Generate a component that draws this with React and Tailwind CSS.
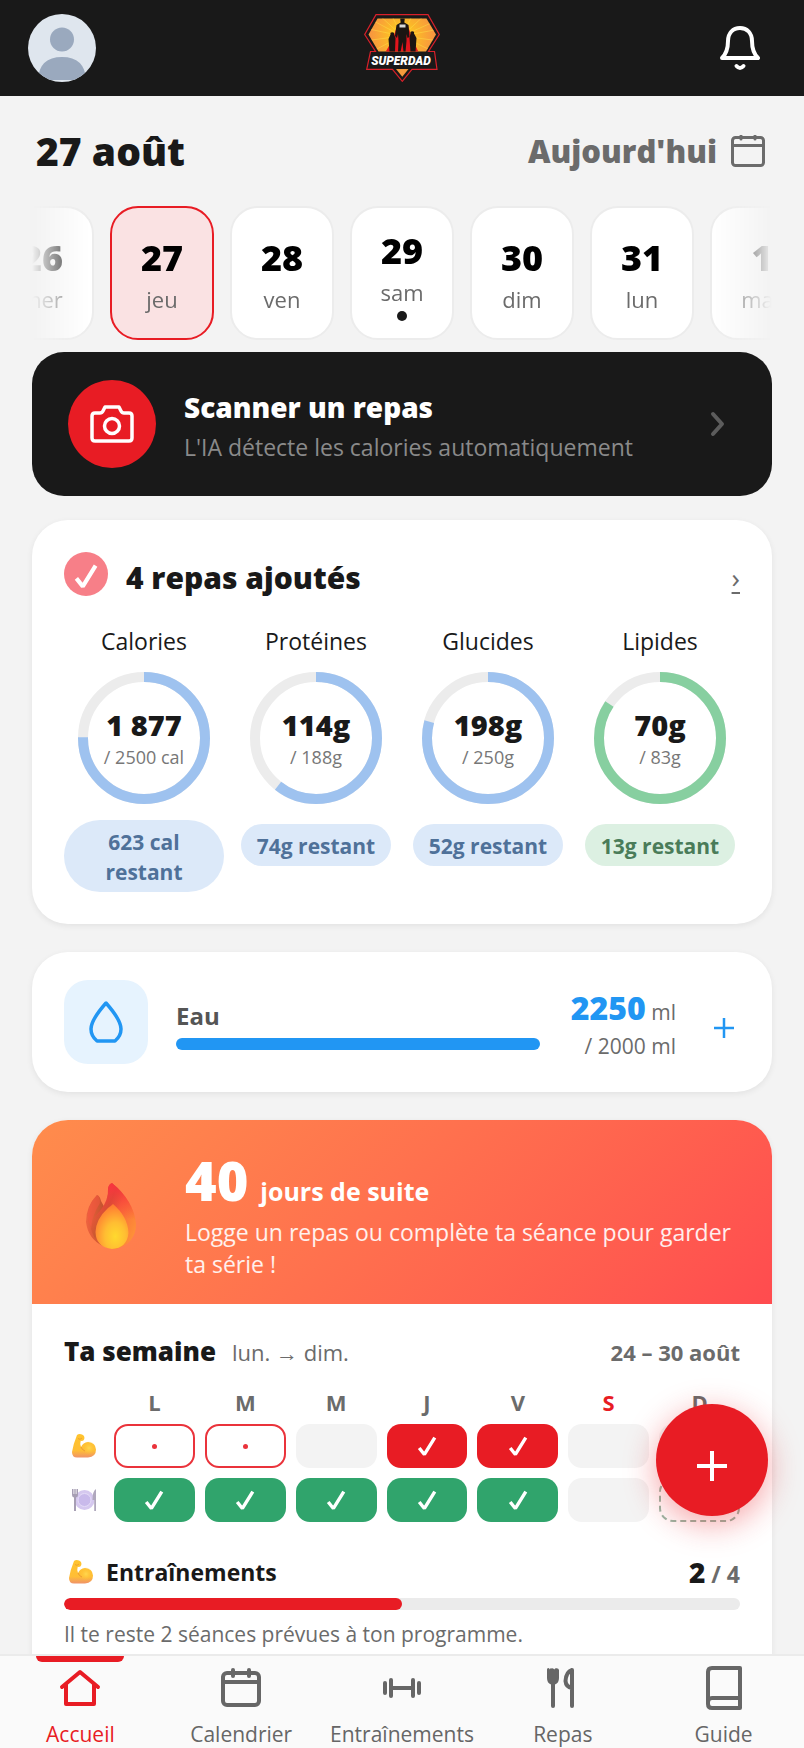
import React from "react";

const DAYS = [
  { num: "26", label: "mer" },
  { num: "27", label: "jeu", active: true },
  { num: "28", label: "ven" },
  { num: "29", label: "sam", dot: true },
  { num: "30", label: "dim" },
  { num: "31", label: "lun" },
  { num: "1", label: "mar" },
];

const MACROS = [
  { name: "Calories", value: "1 877", goal: "/ 2500 cal", left: "623 cal restant", ratio: 0.7508, color: "#9ec2ef", pill: "mt-4 rounded-[36px] px-6 bg-[#dce9f9] text-[#4f7199]" },
  { name: "Protéines", value: "114g", goal: "/ 188g", left: "74g restant", ratio: 0.606, color: "#9ec2ef", pill: "mt-5 rounded-full px-4 bg-[#dce9f9] text-[#4f7199]" },
  { name: "Glucides", value: "198g", goal: "/ 250g", left: "52g restant", ratio: 0.792, color: "#9ec2ef", pill: "mt-5 rounded-full px-4 bg-[#dce9f9] text-[#4f7199]" },
  { name: "Lipides", value: "70g", goal: "/ 83g", left: "13g restant", ratio: 0.843, color: "#87cfa0", pill: "mt-5 rounded-full px-4 bg-[#dcf0e2] text-[#4a7c59]" },
];

const WEEK = ["L", "M", "M", "J", "V", "S", "D"];
const TRAINING = ["planned", "planned", "empty", "done", "done", "empty", "empty"];
const MEALS = ["done", "done", "done", "done", "done", "empty", "today"];

const Logo = () => (
  <svg width="76" height="68" viewBox="0 0 76 68" role="img" aria-label="Superdad">
    <defs>
      <radialGradient id="sun" cx="38" cy="22" r="32" gradientUnits="userSpaceOnUse">
        <stop offset="0" stopColor="#ffdc1e" />
        <stop offset="0.45" stopColor="#fbb829" />
        <stop offset="1" stopColor="#f7963f" />
      </radialGradient>
      <clipPath id="shield">
        <path d="M13.5 4.5H62.5L72 20.5L62 37.5H14.5L4.5 20.5Z" />
      </clipPath>
    </defs>
    <path
      d="M12 .7H64L75.3 20.5L64.5 37.5H70.5L73 55.3H48L38.3 67.3L28.5 55.3H2.7L6.5 37.5H11.5L.7 20.5Z"
      fill="#191919"
      stroke="#d9202a"
      strokeWidth="1.2"
    />
    <g clipPath="url(#shield)">
      <rect width="76" height="40" fill="url(#sun)" />
      <g stroke="#fde047" strokeWidth="1" opacity="0.5">
        <path d="M38 22L4 4M38 22L14 0M38 22L27 0M38 22L49 0M38 22L62 0M38 22L74 6M38 22L76 15M38 22L76 27M38 22L70 38M38 22L0 14M38 22L0 27M38 22L7 38" />
      </g>
      <path d="M33 12Q29 26 21.500 38H54.500Q48 26 44 12Z" fill="#e3151d" />
      <path
        d="M36.3 5.5Q36.3 2.5 38.5 2.5T40.7 5.5L40.3 8.5L44.5 11L45.5 23L43.5 24L42.5 20L42.5 27L41.5 38H39.5L38.5 28L36.5 38H34L34.5 27L34 20L33 24L31 22L32.5 11L36.7 8.5Z"
        fill="#1c1512"
      />
      <path d="M26.5 20.5A1.8 1.8 0 1 1 30 20.5L31.5 24L31 38H25.5L24.5 25Z" fill="#1c1512" />
      <path d="M46.5 19.5A1.8 1.8 0 1 1 50 19.5L52.5 24L51.5 38H46.5L45.5 24Z" fill="#1c1512" />
      <rect x="35.5" y="10.5" width="6" height="3" fill="#d8d8d8" />
    </g>
    <path d="M32 55H44.5L38.3 62.8Z" fill="#f59a3c" />
    <text x="37" y="51" textAnchor="middle" fontFamily="Roboto, sans-serif" fontSize="12" fontWeight="900" fontStyle="italic" fill="#fff">
      SUPERDAD
    </text>
  </svg>
);

const Check = ({ className }) => (
  <svg className={className} viewBox="0 0 20 20" fill="none" aria-hidden="true">
    <path d="M4 11.500L8 16.500L16 3.500" stroke="currentColor" strokeWidth="2.600" strokeLinejoin="bevel" />
  </svg>
);

const Biceps = () => (
  <svg width="26" height="26" viewBox="0 0 26 26" aria-hidden="true">
    <defs>
      <linearGradient id="skin" x1="0" y1="0" x2="0" y2="1">
        <stop offset="0" stopColor="#ffc42e" />
        <stop offset="0.7" stopColor="#ffbe35" />
        <stop offset="1" stopColor="#f09368" />
      </linearGradient>
      <radialGradient id="muscle">
        <stop offset="0" stopColor="#ffd84f" />
        <stop offset="1" stopColor="#ffbf33" stopOpacity="0" />
      </radialGradient>
    </defs>
    <path
      d="M6 2Q8 .5 11 1.5Q14 2.5 13.3 6Q12.5 8.5 9.7 7.8Q8.7 11 10 14Q12 9.5 17 9Q24.5 9.5 25 16.5Q25 24 17 24.5H6Q1 24.5 1 19Q2.3 11 6 2Z"
      fill="url(#skin)"
    />
    <circle cx="18" cy="15" r="7" fill="url(#muscle)" />
    <path d="M10 14Q11 17 14 18" fill="none" stroke="#ed9b35" strokeWidth="1" />
    <path d="M7 5.5Q9 7.5 11 5" fill="none" stroke="#e89a2f" strokeWidth="0.8" />
  </svg>
);

const Plate = () => (
  <svg width="26" height="26" viewBox="0 0 26 26" aria-hidden="true">
    <circle cx="13.5" cy="13" r="10" fill="#d5c8ef" />
    <circle cx="13.5" cy="13" r="6.5" fill="#c9baeb" stroke="#e5dcf7" strokeWidth="1" />
    <path d="M1 2V8Q1 10 3 10.5V24H5V10.5Q7 10 7 8V2H5.5V7H4.7V2H3.3V7H2.5V2Z" fill="#a79fb4" />
    <path d="M25 2Q21.5 4 21.5 13H23.2V24H25Z" fill="#b0a8bd" />
  </svg>
);

const Flame = () => (
  <svg width="52" height="68" viewBox="0 0 52 68" aria-hidden="true">
    <defs>
      <linearGradient id="flameBack" x1="0.1" y1="0.2" x2="1" y2="0.8">
        <stop offset="0" stopColor="#fb5240" />
        <stop offset="0.3" stopColor="#c9592f" />
        <stop offset="0.5" stopColor="#f86a38" />
        <stop offset="1" stopColor="#ff9438" />
      </linearGradient>
      <linearGradient id="flameTip" x1="0" y1="0" x2="0" y2="1">
        <stop offset="0" stopColor="#f9333f" />
        <stop offset="0.55" stopColor="#f9333f" stopOpacity="0" />
      </linearGradient>
      <linearGradient id="flameSide" x1="0" y1="0" x2="1" y2="0">
        <stop offset="0" stopColor="#ef6340" />
        <stop offset="0.45" stopColor="#d85a35" />
        <stop offset="1" stopColor="#b94f2b" />
      </linearGradient>
      <radialGradient id="flameCore" cx="0.6" cy="0.72" r="0.7">
        <stop offset="0" stopColor="#ffd92e" />
        <stop offset="0.45" stopColor="#ffbd32" />
        <stop offset="1" stopColor="#ff7a32" />
      </radialGradient>
    </defs>
    <path d="M12 13Q15 14 16 19L22 30L18 64Q3 57 1 40Q1 24 12 13Z" fill="url(#flameSide)" />
    <path d="M12 13Q15 14 15 21Q8 32 6 45Q2 38 3 30Q5 20 12 13Z" fill="#fa5541" opacity="0.5" />
    <path d="M27 1Q49 19 51 42Q51 61 31 67Q11 66 6 47Q7 37 15 29Q24 18 23 6Q24 2 27 1Z" fill="url(#flameBack)" />
    <path d="M27 1Q49 19 51 42Q51 61 31 67Q11 66 6 47Q7 37 15 29Q24 18 23 6Q24 2 27 1Z" fill="url(#flameTip)" />
    <path d="M28 22Q43 35 43.5 51Q42 66 27 67Q11 65 10.5 50Q11 37 23 26Q26 24 28 22Z" fill="url(#flameCore)" />
  </svg>
);

const HomeIcon = () => (
  <svg width="44" height="44" viewBox="0 0 44 44" fill="none" stroke="currentColor" strokeWidth="4" aria-hidden="true">
    <path d="M4 21L22 6L40 21" strokeLinecap="round" strokeLinejoin="round" />
    <path d="M8 18V38H36V18" strokeLinejoin="round" />
  </svg>
);

const CalendarIcon = () => (
  <svg width="44" height="44" viewBox="0 0 44 44" fill="none" stroke="currentColor" strokeWidth="4" aria-hidden="true">
    <rect x="4" y="7" width="36" height="32" rx="4" />
    <path d="M4 16H40" />
    <path d="M14 4V10M30 4V10" strokeLinecap="round" />
  </svg>
);

const DumbbellIcon = () => (
  <svg width="44" height="44" viewBox="0 0 44 44" fill="none" stroke="currentColor" strokeWidth="4" strokeLinecap="round" aria-hidden="true">
    <path d="M5 17V27M11 14V30M11 22H33M33 14V30M39 17V27" />
  </svg>
);

const CutleryIcon = () => (
  <svg width="44" height="44" viewBox="0 0 44 44" aria-hidden="true">
    <path
      d="M6 3.5Q6 2 7.3 2T8.7 3.5Q9.3 2 10.5 2.4Q12 2 13.3 3.5Q14 2 15.3 2.2Q17.7 2 18 4V12Q18 17 14 18.5V40Q14 42 12 42T10 40V18.5Q6 17 6 12Z"
      fill="currentColor"
    />
    <path d="M31 40V4Q25 6 24.5 15Q25 21 31 22" fill="none" stroke="currentColor" strokeWidth="4" strokeLinecap="round" strokeLinejoin="round" />
  </svg>
);

const BookIcon = () => (
  <svg width="44" height="44" viewBox="0 0 44 44" fill="none" stroke="currentColor" strokeWidth="4" strokeLinejoin="round" aria-hidden="true">
    <path d="M10 2H38V42H10Q6 42 6 38V6Q6 2 10 2Z" />
    <path d="M6 36Q6 32 10 32H38" />
  </svg>
);

const NAV = [
  { label: "Accueil", icon: HomeIcon, active: true },
  { label: "Calendrier", icon: CalendarIcon },
  { label: "Entraînements", icon: DumbbellIcon },
  { label: "Repas", icon: CutleryIcon },
  { label: "Guide", icon: BookIcon },
];

const Header = () => (
  <header className="flex h-24 items-center justify-between bg-[#191919] px-7">
    <button aria-label="Profil" className="overflow-hidden rounded-full">
      <svg width="68" height="68" viewBox="0 0 68 68" aria-hidden="true">
        <rect width="68" height="68" fill="#dfe6ee" />
        <circle cx="34" cy="25.5" r="12" fill="#9aa9be" />
        <path d="M10 66Q11 43 34 43T58 66Z" fill="#9aa9be" />
      </svg>
    </button>
    <Logo />
    <button aria-label="Notifications" className="flex w-[68px] justify-center pr-1">
      <svg width="40" height="44" viewBox="0 0 40 44" fill="none" stroke="#fff" strokeWidth="4" strokeLinecap="round" strokeLinejoin="round" aria-hidden="true">
        <path d="M2 32C7 27 8 22 8 15C8 7 13 2 20 2S32 7 32 15C32 22 33 27 38 32Z" />
        <path d="M16.5 40Q20 44 23.5 40" />
      </svg>
    </button>
  </header>
);

const DayStrip = () => (
  <div className="flex justify-center gap-4 overflow-hidden [mask-image:linear-gradient(to_right,transparent,#000_60px,#000_calc(100%-60px),transparent)]">
    {DAYS.map((day) => (
      <button
        key={day.num}
        className={`flex h-[134px] w-[104px] shrink-0 flex-col items-center justify-center rounded-[28px] border-2 ${
          day.active ? "border-[#e81c24] bg-[#fae2e3]" : "border-[#ececec] bg-white"
        }`}
      >
        <span className="mt-1 text-[36px] leading-[44px] font-extrabold text-black">{day.num}</span>
        <span className="mt-1 text-[22px] leading-[30px] text-[#6b6b6b]">{day.label}</span>
        {day.dot && <span className="mt-1 size-[10px] rounded-full bg-[#191919]" />}
      </button>
    ))}
  </div>
);

const ScanCard = () => (
  <button className="flex w-full items-center rounded-[32px] bg-[#191919] px-9 py-7 text-left">
    <span className="flex size-[88px] shrink-0 items-center justify-center rounded-full bg-[#e81c24]">
      <svg width="44" height="38" viewBox="0 0 44 38" fill="none" stroke="#fff" strokeWidth="3.5" strokeLinejoin="round" aria-hidden="true">
        <path d="M5 8H10Q12 8 13 6L15 2H29L31 6Q32 8 34 8H39Q42 8 42 11V33Q42 36 39 36H5Q2 36 2 33V11Q2 8 5 8Z" />
        <circle cx="22" cy="21" r="7.5" />
      </svg>
    </span>
    <span className="ml-7 flex-1 pt-[6px]">
      <span className="block text-[28px] leading-10 font-extrabold text-white">Scanner un repas</span>
      <span className="block text-[23px] leading-10 text-[#8a8a8a]">L'IA détecte les calories automatiquement</span>
    </span>
    <svg className="mr-2" width="20" height="28" viewBox="0 0 20 28" fill="none" stroke="#5c5c5c" strokeWidth="4" strokeLinecap="round" strokeLinejoin="round" aria-hidden="true">
      <path d="M5 4L14 14L5 24" />
    </svg>
  </button>
);

const Ring = ({ macro }) => {
  const length = 2 * Math.PI * 61;
  return (
    <div className="relative size-[132px]">
      <svg className="-rotate-90" width="132" height="132" viewBox="0 0 132 132" fill="none" strokeWidth="10" aria-hidden="true">
        <circle cx="66" cy="66" r="61" stroke="#ececec" />
        <circle cx="66" cy="66" r="61" stroke={macro.color} strokeDasharray={`${length * macro.ratio} ${length}`} />
      </svg>
      <div className="absolute inset-0 flex flex-col items-center justify-center pt-[2px]">
        <span className="text-[29px] leading-9 font-extrabold">{macro.value}</span>
        <span className="text-lg leading-7 text-[#777]">{macro.goal}</span>
      </div>
    </div>
  );
};

const MealsCard = () => (
  <section className="mt-6 rounded-[36px] bg-white p-8 shadow-[0_2px_6px_rgba(0,0,0,0.07)]">
    <div className="flex h-[50px] items-center">
      <span className="flex size-11 items-center justify-center self-start rounded-full bg-[#f77f88] pt-1 text-white">
        <Check className="size-8" />
      </span>
      <h2 className="ml-[18px] flex-1 text-[30px] font-extrabold">4 repas ajoutés</h2>
      <a href="#repas" aria-label="Voir les repas" className="text-[28px] text-[#6b6b6b] underline underline-offset-4">
        ›
      </a>
    </div>
    <div className="mt-5 grid grid-cols-4 gap-3">
      {MACROS.map((macro) => (
        <div key={macro.name} className="flex flex-col items-center">
          <span className="mb-3 text-[23px] leading-[38px]">{macro.name}</span>
          <Ring macro={macro} />
          <span className={`pt-[7px] pb-[5px] text-center text-[21px] leading-[30px] font-bold ${macro.pill}`}>{macro.left}</span>
        </div>
      ))}
    </div>
  </section>
);

const WaterCard = () => (
  <section className="mt-7 flex items-center rounded-[36px] bg-white px-8 py-7 shadow-[0_2px_6px_rgba(0,0,0,0.07)]">
    <span className="flex size-[84px] items-center justify-center rounded-3xl bg-[#e6f3fe]">
      <svg width="36" height="44" viewBox="0 0 36 44" fill="none" stroke="#2196f3" strokeWidth="3.5" strokeLinejoin="round" aria-hidden="true">
        <path d="M18 3Q3 20 3 29Q3 36 9 41H27Q33 36 33 29Q33 20 18 3Z" />
      </svg>
    </span>
    <div className="ml-7 flex-1 pt-1">
      <div className="text-2xl leading-9 font-bold text-[#555]">Eau</div>
      <div className="mt-1 h-3 rounded-full bg-[#2196f3]" role="progressbar" aria-label="Eau" aria-valuenow={100} />
    </div>
    <div className="mt-[10px] w-[136px] text-right text-[21px] leading-[34px] text-[#6b6b6b]">
      <div>
        <span className="text-[32px] font-extrabold text-[#2196f3]">2250</span> ml
      </div>
      <div>/ 2000 ml</div>
    </div>
    <button aria-label="Ajouter de l'eau" className="mt-3 ml-[38px] flex w-[26px] text-[#2196f3]">
      <svg width="20" height="20" viewBox="0 0 20 20" stroke="currentColor" strokeWidth="2.5" aria-hidden="true">
        <path d="M10 0V20M0 10H20" />
      </svg>
    </button>
  </section>
);

const WeekCell = ({ state, color }) => {
  if (state === "done") {
    return (
      <div className={`flex h-11 items-center justify-center rounded-[14px] text-white ${color}`}>
        <Check className="size-[26px]" />
      </div>
    );
  }
  if (state === "planned") {
    return (
      <div className="flex h-11 items-center justify-center rounded-[14px] border-2 border-[#ea333b]">
        <span className="size-[5px] rounded-full bg-[#ea333b]" />
      </div>
    );
  }
  if (state === "today") {
    return <div className="h-11 rounded-[14px] border-2 border-dashed border-[#97b8a5]" />;
  }
  return <div className="h-11 rounded-[14px] bg-[#f3f3f3]" />;
};

const WeekTable = () => (
  <table className="-mx-[10px] mt-2 w-[calc(100%+20px)] table-fixed border-separate border-spacing-[10px]">
    <thead>
      <tr>
        <td className="w-10 p-0" />
        {WEEK.map((letter, i) => (
          <th key={i} scope="col" className={`p-0 text-[22px] leading-6 font-bold ${letter === "S" ? "text-[#e81c24]" : "text-[#6b6b6b]"}`}>
            {letter}
          </th>
        ))}
      </tr>
    </thead>
    <tbody>
      <tr>
        <th scope="row" aria-label="Entraînements" className="p-0 pl-[7px]">
          <Biceps />
        </th>
        {TRAINING.map((state, i) => (
          <td key={i} className="p-0">
            <WeekCell state={state} color="bg-[#e81c24]" />
          </td>
        ))}
      </tr>
      <tr>
        <th scope="row" aria-label="Repas" className="p-0 pl-[7px]">
          <Plate />
        </th>
        {MEALS.map((state, i) => (
          <td key={i} className="p-0">
            <WeekCell state={state} color="bg-[#30a46c]" />
          </td>
        ))}
      </tr>
    </tbody>
  </table>
);

const StreakCard = () => (
  <section className="mt-7 overflow-hidden rounded-t-[36px] bg-white shadow-[0_2px_6px_rgba(0,0,0,0.07)]">
    <div className="flex items-center bg-linear-135 from-[#ff8c4c] to-[#ff4b4f] pt-8 pr-7 pb-6 pl-[53px] text-white">
      <Flame />
      <div className="ml-12 flex-1">
        <div className="flex h-14 items-baseline gap-3">
          <span className="text-[54px] leading-[56px] font-extrabold">40</span>
          <span className="text-[25px] font-bold">jours de suite</span>
        </div>
        <p className="mt-2 text-[23px] leading-8 text-white/90">Logge un repas ou complète ta séance pour garder ta série !</p>
      </div>
    </div>
    <div className="px-8 pt-7 pb-24">
      <div className="flex h-10 items-baseline text-[#6b6b6b]">
        <h2 className="text-[26px] font-extrabold text-[#191919]">Ta semaine</h2>
        <span className="ml-4 flex-1 text-[22px]">lun. → dim.</span>
        <span className="text-[22px] font-bold">24 – 30 août</span>
      </div>
      <WeekTable />
      <div className="mt-[22px] flex h-9 items-center">
        <span className="pl-1">
          <Biceps />
        </span>
        <h3 className="ml-3 flex-1 text-[23px] font-bold">Entraînements</h3>
        <span className="text-[23px] font-bold text-[#6b6b6b]">
          <span className="text-[28px] font-extrabold text-[#191919]">2</span> / 4
        </span>
      </div>
      <div className="mt-2 h-3 overflow-hidden rounded-full bg-[#ebebeb]" role="progressbar" aria-label="Entraînements" aria-valuenow={50}>
        <div className="h-full w-1/2 rounded-full bg-[#e81c24]" />
      </div>
      <p className="mt-2 text-[21px] leading-8 text-[#6b6b6b]">Il te reste 2 séances prévues à ton programme.</p>
    </div>
  </section>
);

const BottomNav = () => (
  <nav className="fixed inset-x-0 bottom-0 grid h-[94px] grid-cols-5 border-t-2 border-[#ebebeb] bg-[#fafafa]">
    {NAV.map(({ label, icon: Icon, active }) => (
      <a
        key={label}
        href={`#${label.toLowerCase()}`}
        aria-current={active ? "page" : undefined}
        className={`flex flex-col items-center ${active ? "text-[#e81c24]" : "text-[#666]"}`}
      >
        <span className={`h-[6px] w-[88px] rounded-b-lg ${active ? "bg-[#e81c24]" : ""}`} />
        <span className="mt-1">
          <Icon />
        </span>
        <span className="mt-[10px] text-[21px] leading-7 font-medium whitespace-nowrap">{label}</span>
      </a>
    ))}
  </nav>
);

const App = () => {
  return (
    <div className="min-h-screen bg-[#f3f3f3] font-['Open_Sans',sans-serif] text-[#191919]">
      <Header />
      <main className="px-8">
        <div className="flex h-[110px] items-center justify-between px-1">
          <h1 className="text-[39px] font-extrabold">27 août</h1>
          <button className="flex items-center gap-[14px] pr-[3px] text-[31px] font-extrabold text-[#6b6b6b]">
            Aujourd'hui
            <svg width="34" height="32" viewBox="0 0 34 32" fill="none" stroke="currentColor" strokeWidth="3" aria-hidden="true">
              <rect x="1.5" y="2.5" width="31" height="28" rx="3" />
              <path d="M1.5 10.5H32.5" />
              <path d="M10 1V4M24 1V4" strokeLinecap="round" />
            </svg>
          </button>
        </div>
        <DayStrip />
        <div className="mt-3">
          <ScanCard />
        </div>
        <MealsCard />
        <WaterCard />
        <StreakCard />
      </main>
      <button
        aria-label="Ajouter"
        className="fixed right-9 bottom-[232px] flex size-28 items-center justify-center rounded-full bg-[#e81c24] text-white shadow-[0_8px_32px_rgba(232,28,36,0.4)]"
      >
        <svg className="mt-3" width="30" height="30" viewBox="0 0 30 30" stroke="currentColor" strokeWidth="4" aria-hidden="true">
          <path d="M15 0V30M0 15H30" />
        </svg>
      </button>
      <BottomNav />
    </div>
  );
};

export default App;
